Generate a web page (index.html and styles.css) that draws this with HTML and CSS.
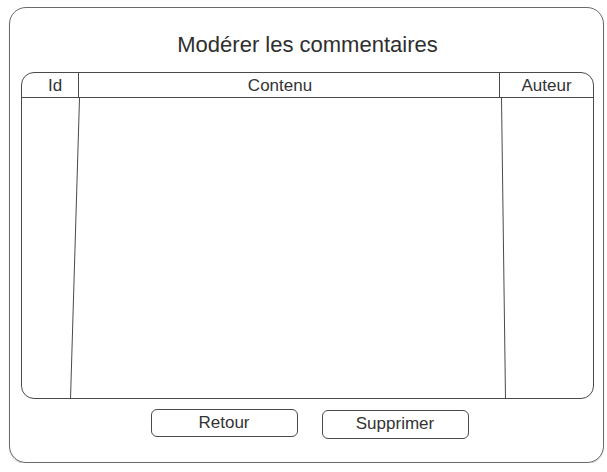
FILE: index.html
```html
<!DOCTYPE html>
<html lang="fr">
<head>
    <meta charset="UTF-8">
    <meta name="viewport" content="width=device-width, initial-scale=1.0">
    <title>Modérer les commentaires</title>
    <link rel="stylesheet" href="styles.css">
</head>
<body>

<div class="frame">
    <div class="title">Modérer les commentaires</div>

    <div class="grid">
        <div class="grid-head">
            <div class="cell cell-id">Id</div>
            <div class="cell cell-content">Contenu</div>
            <div class="cell cell-author">Auteur</div>
        </div>
        <svg class="grid-body" width="572" height="301" viewBox="0 0 572 301">
            <line x1="57.5" y1="0" x2="48.5" y2="301" />
            <line x1="479.5" y1="0" x2="483.5" y2="301" />
        </svg>
    </div>

    <div class="actions">
        <div class="btn">Retour</div>
        <div class="btn btn-delete">Supprimer</div>
    </div>
</div>

</body>
</html>
```

FILE: styles.css
```css
body {
    font-family: "Liberation Sans", Arial, sans-serif;
    background-color: #fff;
    color: #333;
    margin: 0;
}
.frame {
    box-sizing: border-box;
    width: 595px;
    height: 456px;
    margin: 7px 0 0 9px;
    padding: 0 9px 0 11px;
    border: 1.5px solid #6a6a6a;
    border-radius: 17px;
    box-shadow: 0 1px 1px rgba(0, 0, 0, 0.25);
    display: flex;
    flex-direction: column;
}
.title {
    font-size: 22px;
    line-height: 26px;
    text-align: center;
    padding-top: 24px;
    margin-bottom: 14px;
    color: #2e2e2e;
}
.grid {
    box-sizing: border-box;
    width: 573px;
    height: 327px;
    border: 1.3px solid #4a4a4a;
    border-radius: 13px;
    overflow: hidden;
}
.grid-head {
    display: flex;
    height: 24px;
    border-bottom: 1.3px solid #4a4a4a;
}
.cell {
    font-size: 17px;
    line-height: 25px;
    text-align: center;
    color: #333;
}
.cell-id {
    width: 57px;
    padding-left: 10px;
    box-sizing: border-box;
    border-right: 1px solid #4a4a4a;
}
.cell-content {
    width: 421px;
    padding-right: 18px;
    box-sizing: border-box;
    border-right: 1px solid #4a4a4a;
}
.cell-author {
    flex: 1;
}
.grid-body {
    display: block;
}
.grid-body line {
    stroke: #4a4a4a;
    stroke-width: 1;
}
.actions {
    display: flex;
    justify-content: center;
    gap: 24px;
    margin-top: 10px;
    padding-left: 4px;
}
.btn {
    box-sizing: border-box;
    width: 147px;
    height: 28px;
    border: 1.3px solid #4a4a4a;
    border-radius: 6px;
    font-size: 17px;
    line-height: 26px;
    text-align: center;
    color: #333;
}
.btn-delete {
    margin-top: 1px;
    height: 29px;
}
```
